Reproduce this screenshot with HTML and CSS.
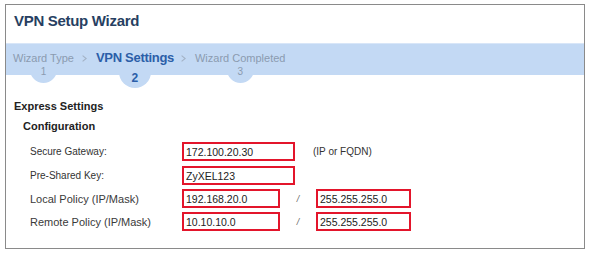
FILE: index.html
```html
<html>

<head>
    <title>VPN Setup Wizard</title>
    <link rel="stylesheet" href="styles.css">
</head>

<body>
    <div class="wizard">
        <div class="header">
            <h1>VPN Setup Wizard</h1>
        </div>
        <div class="steps">
            <div class="step">
                <span class="step-label">Wizard Type</span>
                <span class="step-num">1</span>
            </div>
            <svg class="chevron" width="5" height="7" viewBox="0 0 5 7">
                <polyline points="0.6,0.6 4.2,3.5 0.6,6.4" fill="none" stroke="#a3b2c5" stroke-width="1.1"/>
            </svg>
            <div class="step active">
                <span class="step-label">VPN Settings</span>
                <span class="step-num">2</span>
            </div>
            <svg class="chevron" width="5" height="7" viewBox="0 0 5 7">
                <polyline points="0.6,0.6 4.2,3.5 0.6,6.4" fill="none" stroke="#a3b2c5" stroke-width="1.1"/>
            </svg>
            <div class="step">
                <span class="step-label">Wizard Completed</span>
                <span class="step-num">3</span>
            </div>
        </div>
        <div class="content">
            <h2>Express Settings</h2>
            <h3>Configuration</h3>
            <div class="rows">
                <div class="row first">
                    <span class="label small">Secure Gateway:</span>
                    <input class="field wide" type="text" value="172.100.20.30" readonly>
                    <span class="hint">(IP or FQDN)</span>
                </div>
                <div class="row">
                    <span class="label small">Pre-Shared Key:</span>
                    <input class="field wide" type="text" value="ZyXEL123" readonly>
                </div>
                <div class="row">
                    <span class="label">Local Policy (IP/Mask)</span>
                    <input class="field ip" type="text" value="192.168.20.0" readonly>
                    <span class="slash">/</span>
                    <input class="field mask" type="text" value="255.255.255.0" readonly>
                </div>
                <div class="row">
                    <span class="label">Remote Policy (IP/Mask)</span>
                    <input class="field ip" type="text" value="10.10.10.0" readonly>
                    <span class="slash">/</span>
                    <input class="field mask" type="text" value="255.255.255.0" readonly>
                </div>
            </div>
        </div>
    </div>
</body>

</html>
```

FILE: styles.css
```css
body {
    margin: 0;
    font-family: "Liberation Sans", Arial, sans-serif;
    background: #fff;
}

.wizard {
    box-sizing: border-box;
    width: 580px;
    height: 245px;
    margin: 4px 0 0 5px;
    border: 1px solid #8a8a8a;
}

.header {
    box-sizing: border-box;
    height: 38px;
    padding: 7px 8px 0;
}

h1 {
    margin: 0;
    font-size: 15px;
    line-height: 18px;
    letter-spacing: -0.3px;
    color: #273f62;
}

.steps {
    box-sizing: border-box;
    height: 32px;
    padding: 7px 0 0 7px;
    border-top: 1px solid #d8e6f8;
    background: #c3d9f4;
    display: flex;
    align-items: baseline;
}

.step {
    display: flex;
    flex-direction: column;
    align-items: center;
}

/* keep the label above the circle that hangs under it */
.step-label {
    position: relative;
    z-index: 1;
    font-size: 11px;
    line-height: 14px;
    color: #8b9bb0;
    white-space: nowrap;
}

.step-num {
    box-sizing: border-box;
    width: 27px;
    height: 27px;
    margin-top: -9px;
    padding-top: 10px;
    border-radius: 50%;
    background: #c3d9f4;
    font-size: 10px;
    line-height: 11px;
    text-align: center;
    color: #8b9bb0;
}

.step.active .step-label {
    font-size: 13px;
    font-weight: bold;
    letter-spacing: -0.3px;
    color: #2b5ea8;
}

.step.active .step-num {
    width: 32px;
    height: 32px;
    margin-top: -9px;
    padding-top: 16px;
    font-size: 12px;
    line-height: 12px;
    font-weight: bold;
    color: #2b5ea8;
}

.chevron {
    margin: 0 9px 0 8px;
}

.chevron + .step.active + .chevron {
    margin-left: 7px;
}

.content {
    padding: 25px 0 0 8px;
}

h2 {
    margin: 0;
    font-size: 11px;
    line-height: 13px;
    color: #222;
}

h3 {
    margin: 7px 0 0 9px;
    font-size: 11px;
    line-height: 13px;
    color: #222;
}

.rows {
    margin-top: 9px;
    padding-left: 16px;
    display: flex;
    flex-direction: column;
    gap: 4px;
}

.row {
    display: flex;
    align-items: center;
    height: 19px;
}

.row.first {
    margin-bottom: 1px;
}

.label {
    width: 152px;
    font-size: 11px;
    color: #3a3a3a;
}

.label.small {
    font-size: 10px;
    color: #333;
}

.field {
    box-sizing: border-box;
    height: 19px;
    margin: 0;
    padding: 0 2px;
    border: 2px solid #e3152b;
    background: #fff;
    font-family: "Liberation Sans", Arial, sans-serif;
    font-size: 10.5px;
    color: #222;
    outline: none;
}

.field.wide {
    width: 113px;
}

.field.ip {
    width: 98px;
}

.field.mask {
    width: 95px;
}

.hint {
    margin-left: 18px;
    font-size: 10px;
    color: #333;
}

.slash {
    width: 36px;
    text-align: center;
    font-size: 9px;
    font-style: italic;
    color: #666;
}
```
